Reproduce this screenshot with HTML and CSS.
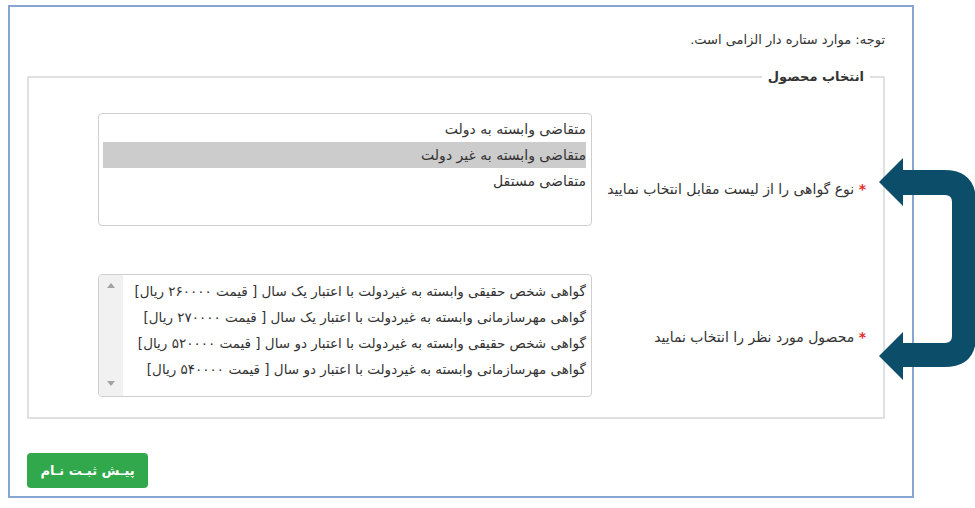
FILE: index.html
```html
<!DOCTYPE html>
<html lang="fa" dir="rtl">
<head>
<meta charset="utf-8">
<title>انتخاب محصول</title>
<link rel="stylesheet" href="styles.css">
</head>
<body>
<div class="panel">
  <p class="note">توجه: موارد ستاره دار الزامی است.</p>
  <fieldset class="group">
    <legend class="group-title">انتخاب محصول</legend>
    <div class="group-body">
      <div class="row">
        <label class="field-label label-1"><span class="req">*</span> نوع گواهی را از لیست مقابل انتخاب نمایید</label>
        <div class="listbox listbox-1">
          <div class="opt">متقاضی وابسته به دولت</div>
          <div class="opt opt-selected">متقاضی وابسته به غیر دولت</div>
          <div class="opt">متقاضی مستقل</div>
        </div>
      </div>
      <div class="row row-2">
        <label class="field-label label-2"><span class="req">*</span> محصول مورد نظر را انتخاب نمایید</label>
        <div class="listbox listbox-2">
          <div class="list-scroll">
            <div class="opt">گواهی شخص حقیقی وابسته به غیردولت با اعتبار یک سال [ قیمت ۲۶۰۰۰۰ ریال]</div>
            <div class="opt">گواهی مهرسازمانی وابسته به غیردولت با اعتبار یک سال [ قیمت ۲۷۰۰۰۰ ریال]</div>
            <div class="opt">گواهی شخص حقیقی وابسته به غیردولت با اعتبار دو سال [ قیمت ۵۲۰۰۰۰ ریال]</div>
            <div class="opt">گواهی مهرسازمانی وابسته به غیردولت با اعتبار دو سال [ قیمت ۵۴۰۰۰۰ ریال]</div>
          </div>
          <div class="scrollbar">
            <span class="sb-arrow sb-up"></span>
            <span class="sb-arrow sb-down"></span>
          </div>
        </div>
      </div>
    </div>
  </fieldset>
  <div class="actions">
    <button class="btn-submit" type="button">پیـش ثبـت نـام</button>
  </div>
</div>
<svg class="bracket-arrow" width="116" height="240" viewBox="0 0 116 240" aria-hidden="true">
  <path d="M19,32 L43,8 L43,20 L84,20 Q116,20 116,52 L116,186 Q116,217 84,217 L43,217 L43,230 L19,206 L43,182 L43,193 L85,193 Q92,193 92,186 L92,52 Q92,45 85,45 L43,45 L43,56 Z" fill="#0c4e6a"/>
</svg>
</body>
</html>
```
FILE: styles.css
```css
html, body {
  margin: 0;
  padding: 0;
  background: #ffffff;
}
body {
  font-family: "DejaVu Sans", "Noto Sans", sans-serif;
  color: #333333;
  font-size: 13px;
  width: 975px;
  height: 508px;
  position: relative;
  overflow: hidden;
}
.panel {
  box-sizing: border-box;
  margin: 5px 61px 0 8px;
  width: 906px;
  height: 493px;
  border: 2px solid #86a5d0;
  padding: 23px 27px 0 17px;
}
.note {
  margin: 0;
  line-height: 20px;
  font-size: 13px;
}
.group {
  margin: 17px 0 0 0;
  padding: 0;
  border: 2px solid #e0e0e0;
  min-width: 0;
}
.group-title {
  margin-right: 13px;
  padding: 0 6px;
  line-height: 20px;
  font-weight: bold;
  font-size: 13px;
}
.group-body {
  padding: 26px 17px 20px 67px;
}
.row {
  display: flex;
  align-items: flex-start;
}
.row-2 {
  margin-top: 48px;
}
.field-label {
  flex: 0 0 274px;
  line-height: 20px;
  font-size: 14px;
}
.label-1 {
  padding-top: 66px;
}
.label-2 {
  padding-top: 53px;
}
.req {
  color: #e52b2b;
  font-weight: bold;
}
.listbox {
  box-sizing: border-box;
  width: 494px;
  border: 1px solid #cfcfcf;
  border-radius: 4px;
  background: #ffffff;
}
.listbox-1 {
  height: 113px;
  padding: 2px 5px 0 4px;
}
.listbox-1 .opt {
  font-size: 14px;
}
.listbox-2 {
  height: 123px;
  display: flex;
  overflow: hidden;
}
.opt {
  height: 26px;
  line-height: 26px;
  white-space: nowrap;
  font-size: 13.5px;
}
.opt-selected {
  background: #cccccc;
}
.list-scroll {
  flex: 1 1 auto;
  min-width: 0;
  overflow: hidden;
  padding: 3px 5px 0 0;
}
.scrollbar {
  flex: 0 0 24px;
  background: #f1f1f1;
  position: relative;
}
.sb-arrow {
  position: absolute;
  left: 8px;
  width: 0;
  height: 0;
  border-left: 4px solid transparent;
  border-right: 4px solid transparent;
}
.sb-up {
  top: 8px;
  border-bottom: 5px solid #a3a3a3;
}
.sb-down {
  bottom: 10px;
  border-top: 5px solid #a3a3a3;
}
.actions {
  display: flex;
  justify-content: flex-end;
  margin-top: 34px;
}
.btn-submit {
  width: 121px;
  height: 35px;
  border: 0;
  border-radius: 4px;
  background: #30a84b;
  color: #ffffff;
  font-family: "DejaVu Sans", "Noto Sans", sans-serif;
  font-weight: bold;
  font-size: 13px;
  padding: 0;
}
.bracket-arrow {
  position: absolute;
  left: 860px;
  top: 150px;
}
```
